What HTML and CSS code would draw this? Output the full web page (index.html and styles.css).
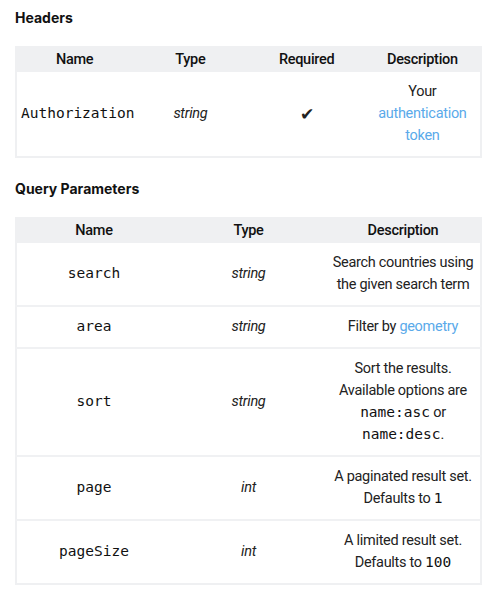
FILE: index.html
```html
<!DOCTYPE html>
<html>
<head>
<meta charset="utf-8">
<link rel="stylesheet" href="styles.css">
</head>
<body>
<h3 class="title">Headers</h3>
<table class="params cols4">
  <thead>
    <tr><th>Name</th><th>Type</th><th>Required</th><th>Description</th></tr>
  </thead>
  <tbody>
    <tr>
      <td><code class="name">Authorization</code></td>
      <td><em>string</em></td>
      <td class="check">✔</td>
      <td>Your <a href="#">authentication token</a></td>
    </tr>
  </tbody>
</table>

<h3 class="title">Query Parameters</h3>
<table class="params cols3">
  <thead>
    <tr><th>Name</th><th>Type</th><th>Description</th></tr>
  </thead>
  <tbody>
    <tr>
      <td><code class="name">search</code></td>
      <td><em>string</em></td>
      <td>Search countries using the given search term</td>
    </tr>
    <tr>
      <td><code class="name">area</code></td>
      <td><em>string</em></td>
      <td>Filter by <a href="#">geometry</a></td>
    </tr>
    <tr>
      <td><code class="name">sort</code></td>
      <td><em>string</em></td>
      <td>Sort the results. Available options are <code>name:asc</code> or <code>name:desc</code>.</td>
    </tr>
    <tr>
      <td><code class="name">page</code></td>
      <td><em>int</em></td>
      <td>A paginated result set. Defaults to <code>1</code></td>
    </tr>
    <tr>
      <td><code class="name">pageSize</code></td>
      <td><em>int</em></td>
      <td>A limited result set. Defaults to <code>100</code></td>
    </tr>
  </tbody>
</table>
</body>
</html>
```

FILE: styles.css
```css
html, body {
  margin: 0;
  background: #fff;
}
body {
  padding: 8px 13px 0 15px;
  font-family: Roboto, "Liberation Sans", sans-serif;
  font-size: 14.5px;
  letter-spacing: -0.3px;
  color: #222;
}
.title {
  margin: 0 0 18px;
  font-family: Inter, "Liberation Sans", sans-serif;
  font-size: 14px;
  line-height: 20px;
  font-weight: 700;
  letter-spacing: 0;
  color: #111;
}
.params {
  width: 100%;
  border-collapse: collapse;
  table-layout: fixed;
  border: 2px solid #eff0f2;
  margin-bottom: 21px;
}
.params th {
  background: #eff0f2;
  font-weight: 500;
  line-height: 22px;
  padding: 1px 4px;
  text-align: center;
  color: #111;
}
.params td {
  text-align: center;
  line-height: 22px;
  padding: 9px 4px;
  border-top: 2px solid #f0f1f3;
}
.params tbody tr:first-child td {
  border-top: 0;
}
.params em {
  font-style: italic;
}
.params a {
  color: #5aaaea;
  text-decoration: none;
}
code {
  font-family: "DejaVu Sans Mono", monospace;
  font-size: 14.5px;
  line-height: 1;
  letter-spacing: 0;
  color: #111;
}
.check {
  font-size: 17px;
}
```
